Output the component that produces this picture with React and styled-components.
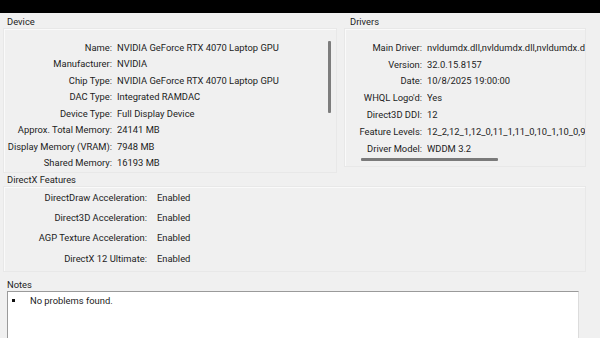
import React from "react";
import styled, { createGlobalStyle } from "styled-components";

const Global = createGlobalStyle`
  html, body { margin: 0; padding: 0; }
  body {
    background: #f0f0f0;
    font-family: Roboto, "Liberation Sans", Arial, sans-serif;
    font-size: 9.4px;
    color: #1c1c1c;
    width: 600px;
    height: 338px;
    overflow: hidden;
  }
`;

const Page = styled.div`
  width: 600px;
  height: 338px;
  overflow: hidden;
  display: flex;
  flex-direction: column;
`;

const TopBar = styled.div`
  height: 13px;
  background: #000;
  flex: none;
`;

const Content = styled.div`
  padding: 3px 14px 0 3px;
  display: flex;
  flex-direction: column;
`;

const TopRow = styled.div`
  display: flex;
  align-items: flex-start;
  gap: 7px;
`;

const Group = styled.section`
  width: ${(p) => p.$w || "auto"};
  margin-top: ${(p) => p.$mt || "0px"};
  flex: none;
`;

const Title = styled.div`
  height: 12px;
  line-height: 12px;
  padding-left: ${(p) => p.$pl || "4px"};
  white-space: nowrap;
`;

const Frame = styled.div`
  position: relative;
  border: 1px solid #e8e8e8;
  box-shadow: inset 1px 1px 0 #fafafa;
  padding: ${(p) => p.$pad || "0"};
  overflow: hidden;
  height: ${(p) => p.$h || "auto"};
  box-sizing: border-box;
`;

const Grid = styled.div`
  display: grid;
  grid-template-columns: ${(p) => p.$label}px minmax(0, 1fr);
  column-gap: ${(p) => p.$gap}px;
  grid-auto-rows: ${(p) => p.$row}px;
  align-items: center;
`;

const Label = styled.div`
  text-align: right;
  white-space: nowrap;
`;

const Value = styled.div`
  white-space: nowrap;
  overflow: hidden;
`;

const VScroll = styled.div`
  position: absolute;
  left: 324px;
  top: 12px;
  width: 3px;
  height: 72px;
  background: #7d7d7d;
  border-radius: 1px;
`;

const HScroll = styled.div`
  position: absolute;
  left: 16px;
  top: 129px;
  width: 137px;
  height: 3px;
  background: #7a7a7a;
  border-radius: 1px;
`;

const NotesBox = styled.div`
  background: #fff;
  border-top: 1px solid #9a9a9a;
  border-left: 1px solid #9a9a9a;
  border-right: 1px solid #dcdcdc;
  margin-left: 4px;
  margin-right: 7px;
  height: 60px;
  padding-top: 1px;
`;

const NoteItem = styled.div`
  display: flex;
  align-items: center;
  height: 14px;
`;

const Bullet = styled.span`
  width: 3px;
  height: 3px;
  background: #111;
  margin: 0 15px 0 4px;
  flex: none;
`;

const device = [
  ["Name:", "NVIDIA GeForce RTX 4070 Laptop GPU"],
  ["Manufacturer:", "NVIDIA"],
  ["Chip Type:", "NVIDIA GeForce RTX 4070 Laptop GPU"],
  ["DAC Type:", "Integrated RAMDAC"],
  ["Device Type:", "Full Display Device"],
  ["Approx. Total Memory:", "24141 MB"],
  ["Display Memory (VRAM):", "7948 MB"],
  ["Shared Memory:", "16193 MB"],
];

const drivers = [
  ["Main Driver:", "nvldumdx.dll,nvldumdx.dll,nvldumdx.dll,nvldumdx.dll"],
  ["Version:", "32.0.15.8157"],
  ["Date:", "10/8/2025 19:00:00"],
  ["WHQL Logo'd:", "Yes"],
  ["Direct3D DDI:", "12"],
  ["Feature Levels:", "12_2,12_1,12_0,11_1,11_0,10_1,10_0,9_3,9_2,9_1"],
  ["Driver Model:", "WDDM 3.2"],
];

const features = [
  ["DirectDraw Acceleration:", "Enabled"],
  ["Direct3D Acceleration:", "Enabled"],
  ["AGP Texture Acceleration:", "Enabled"],
  ["DirectX 12 Ultimate:", "Enabled"],
];

const Rows = ({ data }) =>
  data.map(([l, v]) => (
    <React.Fragment key={l}>
      <Label>{l}</Label>
      <Value>{v}</Value>
    </React.Fragment>
  ));

export default function App() {
  return (
    <Page>
      <Global />
      <TopBar />
      <Content>
        <TopRow>
          <Group $w="334px">
            <Title>Device</Title>
            <Frame $pad="10px 0 0 0" $h="145px">
              <Grid $label={108} $gap={5} $row={16.5}>
                <Rows data={device} />
              </Grid>
              <VScroll />
            </Frame>
          </Group>
          <Group $w="242px">
            <Title $pl="6px">Drivers</Title>
            <Frame $pad="10px 0 0 0" $h="139px">
              <Grid $label={77} $gap={5} $row={16.8}>
                <Rows data={drivers} />
              </Grid>
              <HScroll />
            </Frame>
          </Group>
        </TopRow>
        <Group $w="583px" $mt="1px">
          <Title>DirectX Features</Title>
          <Frame $pad="0" $h="86px">
            <Grid $label={143} $gap={10} $row={20.3}>
              <Rows data={features} />
            </Grid>
          </Frame>
        </Group>
        <Group $w="583px" $mt="7px">
          <Title>Notes</Title>
          <NotesBox>
            <NoteItem>
              <Bullet />
              No problems found.
            </NoteItem>
          </NotesBox>
        </Group>
      </Content>
    </Page>
  );
}
